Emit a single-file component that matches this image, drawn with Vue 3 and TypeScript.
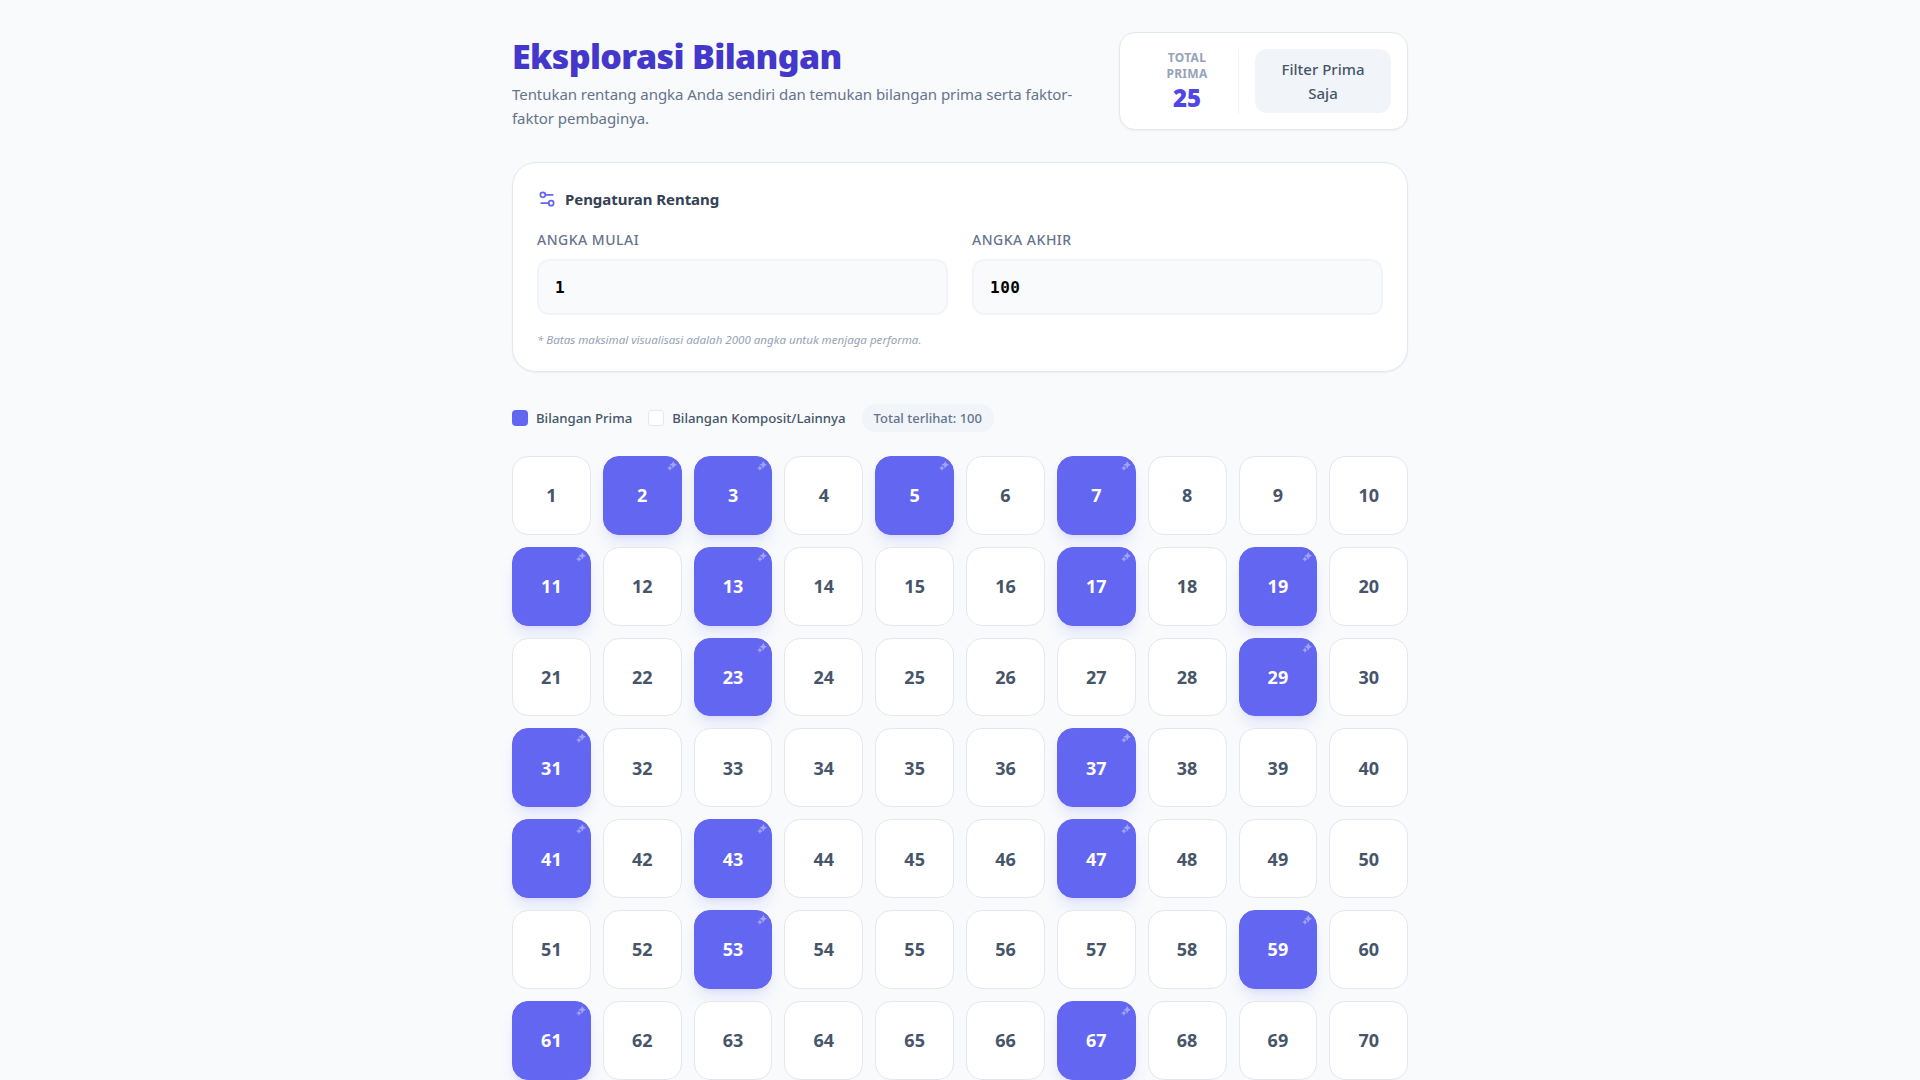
<template>
  <div class="page">
    <header class="head">
      <div class="head__text">
        <h1>Eksplorasi Bilangan</h1>
        <p>Tentukan rentang angka Anda sendiri dan temukan bilangan prima serta faktor-faktor pembaginya.</p>
      </div>
      <div class="stats">
        <div class="stats__count">
          <span class="stats__label">Total Prima</span>
          <span class="stats__value">{{ primeCount }}</span>
        </div>
        <button class="stats__filter" type="button">Filter Prima Saja</button>
      </div>
    </header>

    <section class="range">
      <div class="range__title">
        <svg viewBox="0 0 24 24" width="20" height="20" fill="none" stroke="currentColor" stroke-width="2" stroke-linecap="round" stroke-linejoin="round" aria-hidden="true">
          <path d="M14 17H5" />
          <path d="M19 7h-9" />
          <circle cx="17" cy="17" r="3" />
          <circle cx="7" cy="7" r="3" />
        </svg>
        <h2>Pengaturan Rentang</h2>
      </div>
      <div class="range__fields">
        <label class="field">
          <span>Angka Mulai</span>
          <input type="number" :value="start" />
        </label>
        <label class="field">
          <span>Angka Akhir</span>
          <input type="number" :value="end" />
        </label>
      </div>
      <p class="range__note">* Batas maksimal visualisasi adalah 2000 angka untuk menjaga performa.</p>
    </section>

    <div class="legend">
      <span class="legend__item"><i class="swatch swatch--prime"></i>Bilangan Prima</span>
      <span class="legend__item"><i class="swatch"></i>Bilangan Komposit/Lainnya</span>
      <span class="legend__total">Total terlihat: {{ numbers.length }}</span>
    </div>

    <div class="grid">
      <div v-for="n in numbers" :key="n" :class="['cell', { 'is-prime': isPrime(n) }]">
        {{ n }}
        <svg v-if="isPrime(n)" class="cell__spark" viewBox="0 0 24 24" width="10" height="10" fill="currentColor" aria-hidden="true">
          <path d="M15 0l3 6 6 3-6 3-3 6-3-6-6-3 6-3z" />
          <path d="M7 10l2.200 4.800L14 17l-4.800 2.200L7 24l-2.200-4.800L0 17l4.800-2.200z" />
        </svg>
      </div>
    </div>
  </div>
</template>

<script setup lang="ts">
import { computed, ref } from 'vue'

const start = ref(1)
const end = ref(100)

function isPrime(n: number): boolean {
  if (n < 2) return false
  for (let i = 2; i * i <= n; i++) {
    if (n % i === 0) return false
  }
  return true
}

const numbers = computed(() => {
  const list: number[] = []
  for (let n = start.value; n <= end.value; n++) list.push(n)
  return list
})
const primeCount = computed(() => numbers.value.filter(isPrime).length)
</script>

<style>
html, body { background: #f8fafc; }
</style>

<style scoped>
.page { box-sizing: border-box; max-width: 896px; margin: 0 auto; padding: 32px 0; font-family: "Noto Sans", sans-serif; color: #334155; }
.head { display: flex; align-items: center; justify-content: space-between; gap: 16px; margin-bottom: 32px; }
.head__text { flex: 1; min-width: 0; }
h1 { margin: 3px 0 6px; font-size: 34px; line-height: 40px; font-weight: 900; letter-spacing: -0.64px; color: #4338ca; }
.head__text p { margin: 0; font-size: 15px; line-height: 24px; letter-spacing: -0.05px; color: #64748b; }
.stats { display: flex; align-items: center; gap: 16px; box-sizing: border-box; width: 289px; height: 98px; padding: 16px; background: #fff; border: 1px solid #e2e8f0; border-radius: 16px; box-shadow: 0 1px 2px rgba(0, 0, 0, .05); }
.stats__count { display: flex; flex-direction: column; align-items: center; flex: 1; padding: 1px 16px 0; border-right: 1px solid #f1f5f9; }
.stats__label { font-size: 12px; line-height: 16px; font-weight: 700; text-transform: uppercase; text-align: center; letter-spacing: .3px; color: #94a3b8; }
.stats__value { font-size: 24px; line-height: 32px; font-weight: 900; color: #4f46e5; }
.stats__filter { width: 136px; padding: 8px 16px; border: 0; border-radius: 12px; background: #f1f5f9; font: 500 15px/24px "Noto Sans", sans-serif; color: #475569; }
.range { box-sizing: border-box; padding: 24px 24px 23px; margin-bottom: 32px; background: #fff; border: 1px solid #e2e8f0; border-radius: 24px; box-shadow: 0 1px 2px rgba(0, 0, 0, .05); }
.range__title { display: flex; align-items: center; gap: 8px; margin-bottom: 19px; color: #6366f1; }
h2 { margin: 0; font-size: 15px; line-height: 24px; font-weight: 700; letter-spacing: -0.05px; color: #334155; }
.range__fields { display: grid; grid-template-columns: 1fr 1fr; gap: 24px; }
.field { display: block; }
.field span { display: block; margin-bottom: 9px; font-size: 14px; line-height: 20px; font-weight: 500; text-transform: uppercase; letter-spacing: .5px; color: #64748b; }
.field input { display: block; box-sizing: border-box; width: 100%; height: 56px; padding: 12px 16px; background: #f8fafc; border: 2px solid #f1f5f9; border-radius: 12px; outline: 0; font: 700 16px/24px "DejaVu Sans Mono", monospace; letter-spacing: .5px; color: #000; appearance: textfield; }
.range__note { margin: 17px 0 0; font-size: 11.560px; line-height: 16px; font-style: italic; color: #94a3b8; }
.legend { display: flex; align-items: center; gap: 16px; margin-bottom: 24px; font-size: 13.200px; font-weight: 500; color: #475569; }
.legend__item { display: flex; align-items: center; gap: 8px; }
.swatch { display: block; width: 16px; height: 16px; box-sizing: border-box; background: #fff; border: 1px solid #e2e8f0; border-radius: 4px; }
.swatch--prime { background: #6366f1; border: 0; }
.legend__total { padding: 4px 12px; background: #f1f5f9; border-radius: 999px; font-size: 13px; line-height: 20px; color: #64748b; }
.grid { display: grid; grid-template-columns: repeat(10, 1fr); gap: 12px; }
.cell { position: relative; display: flex; align-items: center; justify-content: center; aspect-ratio: 1; box-sizing: border-box; background: #fff; border: 1px solid #e2e8f0; border-radius: 16px; font-size: 18px; font-weight: 700; color: #475569; }
.cell.is-prime { background: #6366f1; border-color: #6366f1; color: #fff; box-shadow: 0 10px 15px -3px rgba(99, 102, 241, .15), 0 4px 6px -4px rgba(99, 102, 241, .15); }
.cell__spark { position: absolute; top: 4px; right: 4px; opacity: .4; }
</style>
